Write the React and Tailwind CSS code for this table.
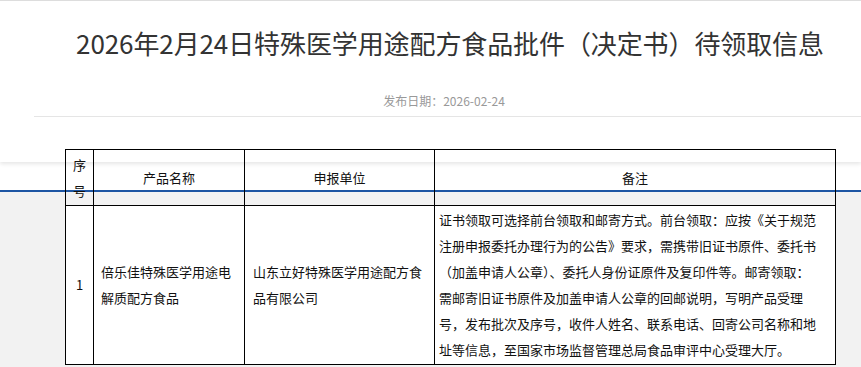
export default function App() {
  const noteLines = [
    "证书领取可选择前台领取和邮寄方式。前台领取：应按《关于规范",
    "注册申报委托办理行为的公告》要求，需携带旧证书原件、委托书",
    "（加盖申请人公章）、委托人身份证原件及复印件等。邮寄领取：",
    "需邮寄旧证书原件及加盖申请人公章的回邮说明，写明产品受理",
    "号，发布批次及序号，收件人姓名、联系电话、回寄公司名称和地",
    "址等信息，至国家市场监督管理总局食品审评中心受理大厅。",
  ];

  return (
    <div
      className="relative w-[861px] h-[367px] overflow-hidden bg-[#f2f2f2]"
      style={{ fontFamily: '"Noto Sans CJK SC", "Noto Sans", sans-serif' }}
    >
      {/* page background bands */}
      <div className="absolute inset-0 flex flex-col">
        <div className="relative z-[1] h-[162px] bg-white border-t border-[#dddddd] shadow-[0_2px_4px_rgba(0,0,0,0.10)]" />
        <div className="h-[28px] bg-white" />
        <div className="h-[2px] bg-[#1d55a3]" />
        <div className="flex-1 bg-[#f2f2f2]" />
      </div>

      {/* article */}
      <div className="relative z-10 ml-[34px] w-[832px]">
        <h1 className="pt-[23px] text-center text-[26px] leading-[40px] font-normal text-[#333333] whitespace-nowrap tracking-[-0.1px]">
          2026年2月24日特殊医学用途配方食品批件（决定书）待领取信息
        </h1>
        <div className="mt-[29px] pr-[12px] text-center text-[12px] leading-[18px] text-[#999999]">
          发布日期：2026-02-24
        </div>
        <div className="mt-[6px] h-px bg-[#e5e5e5] w-[900px]" />

        <table className="mt-[32px] ml-[31px] w-[770px] table-fixed border-collapse text-[13px] leading-[26px] text-[#111111]">
          <colgroup>
            <col className="w-[28px]" />
            <col className="w-[151px]" />
            <col className="w-[190px]" />
            <col className="w-[401px]" />
          </colgroup>
          <thead>
            <tr className="h-[56px]">
              <th className="border border-black font-normal text-center align-middle px-0">
                序<br />号
              </th>
              <th className="border border-black font-normal text-center align-middle">
                产品名称
              </th>
              <th className="border border-black font-normal text-center align-middle">
                申报单位
              </th>
              <th className="border border-black font-normal text-center align-middle">
                备注
              </th>
            </tr>
          </thead>
          <tbody>
            <tr className="bg-white">
              <td className="border border-black text-center align-middle">1</td>
              <td className="border border-black align-middle pl-[7px] whitespace-nowrap">
                倍乐佳特殊医学用途电
                <br />
                解质配方食品
              </td>
              <td className="border border-black align-middle pl-[8px] whitespace-nowrap">
                山东立好特殊医学用途配方食
                <br />
                品有限公司
              </td>
              <td className="border border-black align-middle pl-[4px] py-[1px]">
                {noteLines.map((line, i) => (
                  <div key={i} className="whitespace-nowrap">
                    {line}
                  </div>
                ))}
              </td>
            </tr>
          </tbody>
        </table>
      </div>
    </div>
  );
}
